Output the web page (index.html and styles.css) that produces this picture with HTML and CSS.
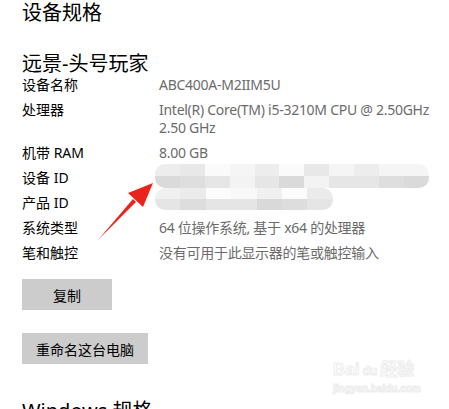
FILE: index.html
```html
<html>
<head>
    <title>设备规格</title>
    <link rel="stylesheet" href="styles.css">
</head>
<body>
<div class="page">
    <h1 class="title">设备规格</h1>
    <h2 class="heading">远景-头号玩家</h2>
    <div class="specs">
        <div class="row"><span class="label">设备名称</span><span class="value">ABC400A-M2IIM5U</span></div>
        <div class="row"><span class="label">处理器</span><span class="value">Intel(R) Core(TM) i5-3210M CPU @ 2.50GHz<br>2.50 GHz</span></div>
        <div class="row"><span class="label">机带 RAM</span><span class="value">8.00 GB</span></div>
        <div class="row"><span class="label">设备 ID</span><span class="value"></span></div>
        <div class="row"><span class="label">产品 ID</span><span class="value"></span></div>
        <div class="row"><span class="label">系统类型</span><span class="value">64 位操作系统, 基于 x64 的处理器</span></div>
        <div class="row"><span class="label">笔和触控</span><span class="value">没有可用于此显示器的笔或触控输入</span></div>
    </div>
    <div class="actions">
        <button type="button">复制</button>
        <button type="button">重命名这台电脑</button>
    </div>
    <h2 class="heading">Windows 规格</h2>
</div>

<div class="mosaic">
    <div class="blur blur-long"><i></i><i></i><i></i><i></i><i></i><i></i><i></i><i></i><i></i><i></i><i></i><i></i><i></i><i></i><i></i><i></i><i></i><i></i><i></i><i></i><i></i><i></i></div>
    <div class="blur blur-short"><i></i><i></i><i></i><i></i><i></i><i></i><i></i><i></i><i></i><i></i><i></i><i></i><i></i><i></i></div>
</div>

<svg class="arrow" width="70" height="70" viewBox="0 0 70 70">
    <path d="M0 63 L35 22 L38 25 Z" fill="#e8251d"/>
    <path d="M55 6 L30 16 L45 30 Z" fill="#e8251d"/>
</svg>

<div class="watermark">
    <div class="wm-logo"><span>Bai</span><span class="wm-du">du</span><span>经验</span></div>
    <div class="wm-url">jingyan.baidu.com</div>
</div>
</body>
</html>
```

FILE: styles.css
```css
html, body {
    margin: 0;
    background-color: #ffffff;
    color: #000000;
    font-family: "Noto Sans", "Noto Sans CJK SC", sans-serif;
}

.page {
    padding-left: 22px;
}

.title {
    margin: 0 0 26px 0;
    font-size: 20px;
    font-weight: normal;
    line-height: 26px;
}

.heading {
    margin: 0;
    font-size: 20px;
    font-weight: normal;
    line-height: 24px;
}

.specs {
    font-size: 14px;
    line-height: 18px;
}

.row {
    display: flex;
    margin-bottom: 7px;
    min-height: 18px;
}

.label {
    width: 137px;
    flex-shrink: 0;
}

.value {
    color: #6b6b6b;
    letter-spacing: -0.27px;
}

.actions {
    display: flex;
    flex-direction: column;
    align-items: flex-start;
    gap: 23px;
    margin-top: 17px;
    margin-bottom: 35px;
}

button {
    height: 31px;
    min-width: 90px;
    padding: 0 14px;
    border: none;
    border-radius: 0;
    background-color: #cccccc;
    color: #000000;
    font-family: "Noto Sans", "Noto Sans CJK SC", sans-serif;
    font-size: 14px;
}

/* blurred ids */
.mosaic {
    position: absolute;
    left: 155px;
    top: 164px;
    display: flex;
    flex-direction: column;
}

.blur {
    display: flex;
    flex-wrap: wrap;
    overflow: hidden;
    border-radius: 10px;
    background: linear-gradient(#f5f5f5 50%, #e6e6e6 50%);
}

.blur i {
    display: block;
    width: 12px;
    height: 12px;
}

.blur-long {
    width: 274px;
    height: 24px;
}

.blur-long i {
    width: 24.9px;
}

.blur-short {
    width: 178px;
    height: 22px;
    background: linear-gradient(#f8f8f8 50%, #e5e5e5 50%);
}

.blur-short i {
    width: 25.4px;
    height: 11px;
}

.blur i:nth-child(3n) { background: rgba(255, 255, 255, 0.5); }
.blur i:nth-child(4n+1) { background: rgba(0, 0, 0, 0.03); }
.blur i:nth-child(5n+2) { background: rgba(0, 0, 0, 0.05); }

/* red annotation arrow */
.arrow {
    position: absolute;
    left: 98px;
    top: 177px;
}

/* watermark */
.watermark {
    position: absolute;
    left: 333px;
    top: 360px;
    color: #ffffff;
    font-family: "Liberation Sans", "Noto Sans CJK SC", sans-serif;
    -webkit-text-stroke: 1px #ededed;
}

.wm-logo {
    font-size: 17px;
    font-weight: bold;
    line-height: 20px;
}

.wm-du {
    display: inline-block;
    margin: 0 3px;
    font-size: 12px;
}

.wm-url {
    font-size: 10px;
    font-weight: bold;
    line-height: 16px;
}
```
